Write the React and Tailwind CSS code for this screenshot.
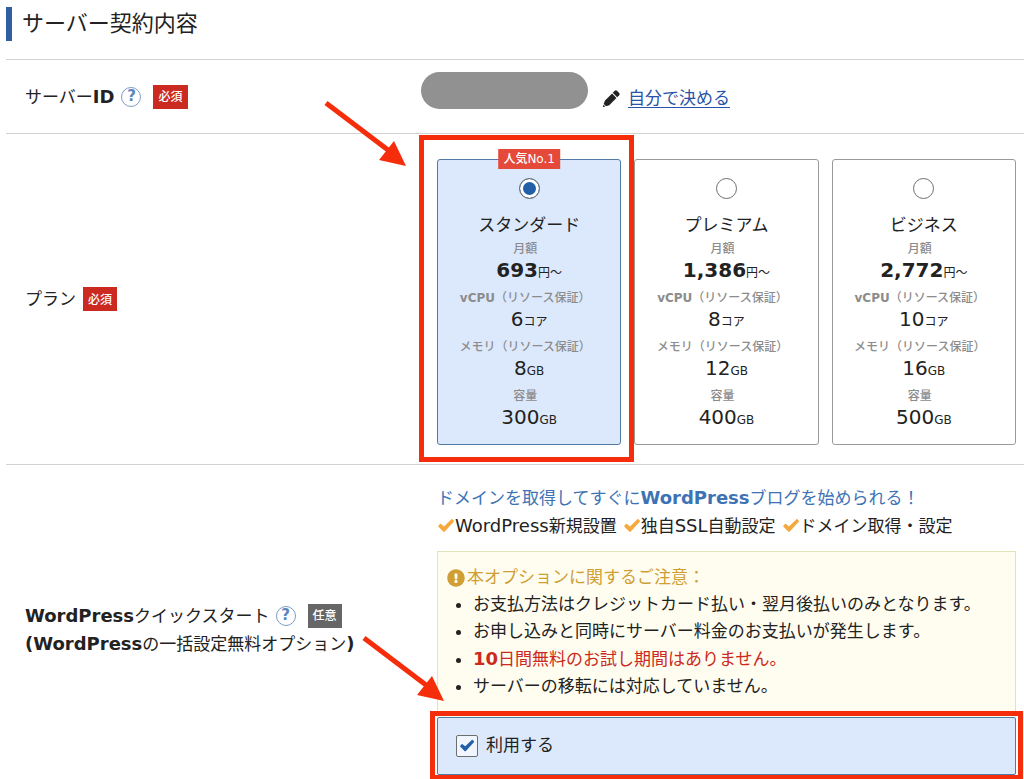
import { FaExclamationCircle } from "react-icons/fa";

const plans = [
  { id: "standard", name: "スタンダード", price: "693", cpu: "6", mem: "8", disk: "300", popular: true },
  { id: "premium", name: "プレミアム", price: "1,386", cpu: "8", mem: "12", disk: "400" },
  { id: "business", name: "ビジネス", price: "2,772", cpu: "10", mem: "16", disk: "500" },
];

function Strong({ children }) {
  return <b className="text-[18px] font-bold">{children}</b>;
}

function Latin({ children }) {
  return <span className="text-[18px]">{children}</span>;
}

function CheckIcon({ className }) {
  return (
    <svg viewBox="0 0 18 18" aria-hidden="true" className={className}>
      <path d="M1 9.2 2.9 6.9Q3.4 6.4 4 6.9L7 9.4 14.4 2.3Q15 1.8 15.5 2.3L17.2 4.2 7.8 14.6Q7 15.4 6.2 14.6Z" fill="currentColor" />
    </svg>
  );
}

function PencilIcon({ className }) {
  return (
    <svg viewBox="0 0 18 18" aria-hidden="true" className={className}>
      <g transform="translate(0.8 17.2) rotate(-45)" fill="currentColor">
        <path d="M0 0 2.2-1.3V1.3Z" />
        <path d="M3-1.7 6-3.1H16.2V3.1H6L3 1.7Z" />
        <path d="M17.2-3.1H20Q21.6-3.1 21.6-1.6V1.6Q21.6 3.1 20 3.1H17.2Z" />
      </g>
    </svg>
  );
}

function HelpButton({ label }) {
  return (
    <button
      type="button"
      aria-label={label}
      className="inline-flex size-5 shrink-0 items-center justify-center rounded-full border border-[#7d9cc4] bg-white text-[15px] leading-none font-bold text-[#5b86bd]"
    >
      ?
    </button>
  );
}

function Badge({ required, children }) {
  return (
    <span
      className={`inline-flex h-6 shrink-0 items-center px-[5px] pt-[2px] text-[12px] font-medium text-white ${
        required ? "bg-[#cb2a20]" : "bg-[#666666]"
      }`}
    >
      {children}
    </span>
  );
}

function Arrow({ className }) {
  return (
    <svg viewBox="0 0 84 67" aria-hidden="true" className={`pointer-events-none absolute h-[67px] w-[84px] max-w-none ${className}`}>
      <path d="M4 4 66 51" fill="none" stroke="#f52d0b" strokeWidth="5" strokeLinecap="butt" />
      <path d="M84 67 57 61 72 42Z" fill="#f52d0b" />
    </svg>
  );
}

function Spec({ label, value, unit, bold }) {
  return (
    <div>
      <dt className="pr-2 text-[12px] leading-5 font-medium text-[#8c8c8c]">{label}</dt>
      <dd className="text-[12px] leading-[22px]">
        <span className={bold ? "text-[20px] font-bold" : "text-[20px]"}>{value}</span>
        {unit}
      </dd>
    </div>
  );
}

function PlanCard({ plan }) {
  return (
    <div className="relative">
      <label
        className={`flex flex-col items-center rounded-[3px] border pt-[18px] pb-[13px] text-center ${
          plan.popular ? "border-[#4f7ba5] bg-[#dce9fc]" : "border-[#9a9a9a] bg-white"
        }`}
      >
        <input
          type="radio"
          name="plan"
          value={plan.id}
          defaultChecked={plan.popular}
          className="size-[21px] appearance-none rounded-full border border-[#6e6e6e] bg-white checked:bg-[#2160a8] checked:shadow-[inset_0_0_0_3px_#fff]"
        />
        <span className="mt-[13px] text-[17px] leading-[26px]">{plan.name}</span>
        <dl className="mt-px flex flex-col gap-1">
          <Spec label="月額" value={plan.price} unit="円〜" bold />
          <Spec label={<><b>vCPU</b>（リソース保証）</>} value={plan.cpu} unit="コア" />
          <Spec label="メモリ（リソース保証）" value={plan.mem} unit="GB" />
          <Spec label="容量" value={plan.disk} unit="GB" />
        </dl>
      </label>
      {plan.popular && (
        <>
          <span className="absolute -top-[10px] left-1/2 -translate-x-1/2 bg-[#e4493a] px-[5px] text-[12px] leading-5 font-medium whitespace-nowrap text-white">
            人気No.1
          </span>
          <div className="pointer-events-none absolute -top-6 -right-[13px] -bottom-[17px] -left-[18px] z-10 border-5 border-[#f52d0b]" />
          <Arrow className="-top-[60px] -left-[115px]" />
        </>
      )}
    </div>
  );
}

function Row({ label, className, children }) {
  return (
    <div className={`grid grid-cols-[431px_minmax(0,1fr)] items-center border-t border-[#d2d2d2] pr-2 ${className}`}>
      <div className="pl-[19px] leading-[27px]">{label}</div>
      <div>{children}</div>
    </div>
  );
}

function Feature({ children }) {
  return (
    <li className="flex items-center">
      <CheckIcon className="size-[18px] text-[#f5a83c]" />
      <span>{children}</span>
    </li>
  );
}

export default function App() {
  return (
    <main className="overflow-x-hidden bg-white pt-[7px] pl-[6px] font-['DejaVu_Sans','Noto_Sans_CJK_JP',sans-serif] text-[17px] text-[#222222]">
      <h1 className="mb-[18px] border-l-6 border-[#2f5f9f] pl-[10px] text-[22px] leading-[34px]">サーバー契約内容</h1>

      <Row
        className="h-[74px]"
        label={
          <div className="flex items-center">
            <span>サーバー<Strong>ID</Strong></span>
            <span className="ml-[7px] flex items-center gap-3">
              <HelpButton label="サーバーIDのヘルプ" />
              <Badge required>必須</Badge>
            </span>
          </div>
        }
      >
        <div className="-ml-4 flex items-center">
          <div className="mb-3 h-[37px] w-[167px] rounded-full bg-[#919191]" />
          <a href="#server-id" className="mt-1 ml-[14px] flex items-center gap-2 text-[#2a52a8]">
            <PencilIcon className="size-[18px] text-[#222222]" />
            <span className="underline underline-offset-3">自分で決める</span>
          </a>
        </div>
      </Row>

      <Row
        className=""
        label={
          <div className="flex items-center gap-[7px]">
            <span>プラン</span>
            <Badge required>必須</Badge>
          </div>
        }
      >
        <div className="grid grid-cols-3 gap-[13px] pt-[25px] pb-[19px]">
          {plans.map((plan) => (
            <PlanCard key={plan.id} plan={plan} />
          ))}
        </div>
      </Row>

      <Row
        className="pt-[19px] pb-[5px]"
        label={
          <>
            <div className="flex items-center">
              <span><Strong>WordPress</Strong>クイックスタート</span>
              <span className="ml-[6px] flex items-center gap-3">
                <HelpButton label="WordPressクイックスタートのヘルプ" />
                <Badge>任意</Badge>
              </span>
            </div>
            <div>
              <Strong>(WordPress</Strong>の一括設定無料オプション<Strong>)</Strong>
            </div>
          </>
        }
      >
        <p className="leading-[27px] text-[#3d73b5]">
          ドメインを取得してすぐに<Strong>WordPress</Strong>ブログを始められる！
        </p>
        <ul className="flex gap-[6px] leading-[27px] whitespace-nowrap">
          <Feature><Latin>WordPress</Latin>新規設置</Feature>
          <Feature>独自<Latin>SSL</Latin>自動設定</Feature>
          <Feature>ドメイン取得・設定</Feature>
        </ul>
        <div className="mt-[11px] border border-b-0 border-[#e3e3b8] bg-[#fffdf0] px-[9px] pt-3 pb-[17px] leading-[27px]">
          <p className="flex items-center gap-[2px] text-[#cf9e35]">
            <FaExclamationCircle className="size-[18px]" />
            本オプションに関するご注意：
          </p>
          <ul className="list-disc pl-[26px]">
            <li>お支払方法はクレジットカード払い・翌月後払いのみとなります。</li>
            <li>お申し込みと同時にサーバー料金のお支払いが発生します。</li>
            <li>
              <span className="text-[#cb2a20]"><Strong>10</Strong>日間無料のお試し期間はありません。</span>
            </li>
            <li>サーバーの移転には対応していません。</li>
          </ul>
        </div>
        <div className="relative">
          <label className="flex h-[58px] items-center gap-2 rounded-[2px] border border-[#4f7ba5] bg-[#dce9fc] pl-[18px]">
            <span className="grid place-items-center">
              <input
                type="checkbox"
                defaultChecked
                className="peer col-start-1 row-start-1 size-[22px] appearance-none rounded-[2px] border border-[#6e6e6e] bg-[#f1f6fe]"
              />
              <CheckIcon className="pointer-events-none invisible col-start-1 row-start-1 size-4 text-[#2160a8] peer-checked:visible" />
            </span>
            利用する
          </label>
          <div className="pointer-events-none absolute -inset-x-[7px] -top-[6px] -bottom-[5px] border-5 border-[#f52d0b]" />
          <Arrow className="-top-[83px] -left-[77px]" />
        </div>
      </Row>
    </main>
  );
}
